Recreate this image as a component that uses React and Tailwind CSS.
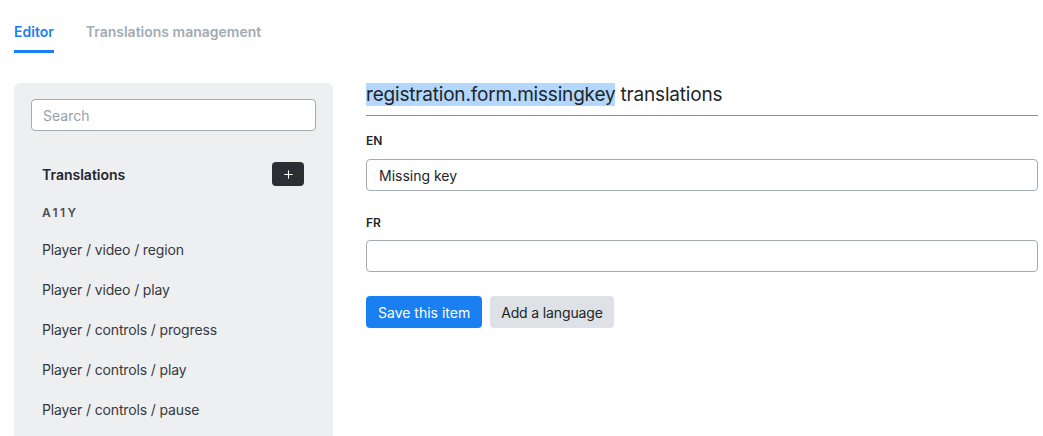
import { Plus } from "lucide-react";

const items = [
  "Player / video / region",
  "Player / video / play",
  "Player / controls / progress",
  "Player / controls / play",
  "Player / controls / pause",
];

const App = () => {
  return (
    <div className="h-[436px] overflow-hidden bg-white text-[#212529]" style={{ fontFamily: "Inter, 'Noto Sans', sans-serif" }}>
      <div className="flex gap-8 px-[14px] pt-[21px]">
        <div className="border-b-[3px] border-[#1a7ff0] pb-[8px] text-[14px] font-semibold text-[#1a7ff0]">Editor</div>
        <div className="pb-[8px] text-[14px] font-semibold text-[#a3abb3]">Translations management</div>
      </div>

      <div className="mt-[30px] flex gap-[33px] pl-[14px] pr-[5px]">
        <aside className="h-[360px] w-[319px] shrink-0 rounded-t-md bg-[#eeeff1] px-[17px] pt-[16px]">
          <input
            type="text"
            placeholder="Search"
            className="h-[32px] w-full rounded-[4px] border border-[#a3abb3] bg-white px-[11px] text-[14px] outline-none placeholder:text-[#9aa1a9]"
          />
          <div className="mt-[31px] flex items-center justify-between pl-[11px] pr-[12px]">
            <span className="text-[14px] font-semibold text-[#212529]">Translations</span>
            <button className="flex h-[24px] w-[32px] items-center justify-center rounded-[4px] bg-[#2b2f33] text-white">
              <Plus size={13} strokeWidth={2} />
            </button>
          </div>
          <div className="mt-[18px] pl-[11px] text-[12px] font-semibold tracking-[0.2em] text-[#495057]">A11Y</div>
          <ul className="mt-[17px] pl-[11px]">
            {items.map((item) => (
              <li key={item} className="h-[40px] text-[14px] tracking-[-0.01em] text-[#343a40]">
                {item}
              </li>
            ))}
          </ul>
        </aside>

        <main className="flex-1">
          <h1 className="border-b border-[#8d949b] pb-[8px] text-[19px] leading-[24px] tracking-[-0.01em] text-[#212529]">
            <span className="bg-[#b3d7ff]">registration.form.missingkey</span> translations
          </h1>
          <label className="mt-[16px] block text-[12px] font-semibold text-[#212529]">EN</label>
          <input
            type="text"
            defaultValue="Missing key"
            className="mt-[9px] h-[32px] w-full rounded-[4px] border border-[#a3abb3] bg-white px-[12px] text-[14px] text-[#212529] outline-none"
          />
          <label className="mt-[23px] block text-[12px] font-semibold text-[#212529]">FR</label>
          <input
            type="text"
            className="mt-[8px] h-[32px] w-full rounded-[4px] border border-[#a3abb3] bg-white px-[12px] text-[14px] outline-none"
          />
          <div className="mt-[24px] flex gap-[8px]">
            <button className="h-[32px] rounded-[4px] bg-[#1a7ff0] px-[12px] text-[14px] text-white">Save this item</button>
            <button className="h-[32px] rounded-[4px] bg-[#dee1e5] px-[11px] text-[14px] tracking-[-0.01em] text-[#212529]">Add a language</button>
          </div>
        </main>
      </div>
    </div>
  );
};

export default App;
